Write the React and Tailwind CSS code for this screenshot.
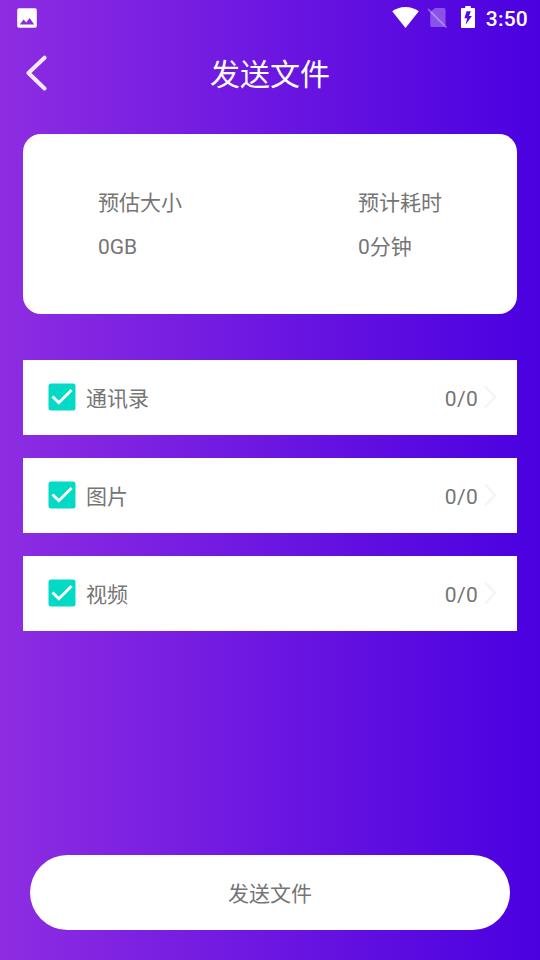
const FONT = "font-[Roboto,'Noto_Sans_CJK_SC',sans-serif]";

function StatusBar() {
  return (
    <div className="flex h-9 items-start text-white">
      <svg className="mt-2 ml-[17px] h-5 w-5" viewBox="0 0 20 20" fill="currentColor">
        <path
          fillRule="evenodd"
          d="M2 0.3h16a1.8 1.8 0 0 1 1.8 1.8v15.8a1.8 1.8 0 0 1-1.8 1.8H2a1.8 1.8 0 0 1-1.8-1.8V2.1A1.8 1.8 0 0 1 2 .3zM2.8 16.4h14.4L12.6 10l-3.4 4.4-2.6-2.8z"
        />
      </svg>
      <div className="flex-1" />
      <svg className="mt-[7px] h-[21px] w-[27px]" viewBox="0 0 27 21" fill="currentColor">
        <path d="M13.5 21L0.2 4.3C3.7 1.6 8.2 0 13.5 0s9.8 1.6 13.3 4.3z" />
      </svg>
      <svg className="mt-[7px] ml-[8px] h-[22px] w-[21px]" viewBox="0 0 21 22" fill="currentColor">
        <path
          d="M8 1h9a1.500 1.500 0 0 1 1.500 1.500V18a2 2 0 0 1-1.500 2H4.800a1.500 1.500 0 0 1-1.500-1.500V5z"
          fillOpacity="0.300"
        />
        <path d="M1 2L19.600 20.600" stroke="currentColor" strokeOpacity="0.300" strokeWidth="1.900" />
      </svg>
      <svg className="mt-[6px] ml-[13px] h-[22px] w-[14px]" viewBox="0 0 14 22" fill="currentColor">
        <path
          fillRule="evenodd"
          d="M4.2 0h5.6v2H13a1 1 0 0 1 1 1v18a1 1 0 0 1-1 1H1a1 1 0 0 1-1-1V3a1 1 0 0 1 1-1h3.2zM9.8 5.2H5.600L3.400 12.300h2.800L4.600 18.800 10.900 10H8z"
        />
      </svg>
      <span className="mt-[6px] mr-3 ml-[11px] text-[21px] leading-[26px] font-medium tracking-[0.2px]">3:50</span>
    </div>
  );
}

function Header() {
  return (
    <header className="grid h-[74px] grid-cols-[1fr_auto_1fr] items-center text-white">
      <svg className="ml-[25px] h-[38px] w-6 blur-[0.6px]" viewBox="0 0 24 38" fill="none" stroke="currentColor" strokeOpacity="0.9">
        <path d="M19.5 3.7L3.5 19l16 15.500" strokeWidth="4" strokeLinecap="round" strokeLinejoin="round" />
      </svg>
      <h1 className="pt-1 text-[30px] leading-[44px]">发送文件</h1>
    </header>
  );
}

function Estimate({ label, value }) {
  return (
    <div className="flex w-[84px] flex-col gap-[14px] pt-[2px] leading-[30px] whitespace-nowrap">
      <span>{label}</span>
      <span>{value}</span>
    </div>
  );
}

function CategoryRow({ label, count }) {
  return (
    <div className="flex h-[75px] items-center bg-white pr-5 pl-[25px]">
      <svg className="mb-[2px] h-7 w-7" viewBox="0 0 28 28" fill="none">
        <rect x="0.5" y="0.5" width="27" height="27" rx="2.5" fill="#03DAC5" />
        <path d="M4.500 13.500l6.300 6.200L23.600 7" stroke="#fff" strokeWidth="2.900" />
      </svg>
      <span className="ml-[10px] flex-1 pt-1">{label}</span>
      <span className="pt-[5px] tracking-[0.3px]">{count}</span>
      <svg className="mb-px ml-[6px] h-6 w-[13px]" viewBox="0 0 13 24" fill="none">
        <path d="M1 1.5L11.2 12 1 22.5" stroke="#f4f4f4" strokeWidth="2.400" />
      </svg>
    </div>
  );
}

export default function App() {
  return (
    <div
      className={`${FONT} flex h-[960px] w-[540px] flex-col bg-[linear-gradient(90deg,#8E2DE2,#4A00E0)] text-[21px] text-[#757575]`}
    >
      <StatusBar />
      <Header />
      <section className="mx-[23px] mt-6 flex h-[180px] items-center justify-between rounded-[18px] bg-white px-[75px]">
        <Estimate label="预估大小" value="0GB" />
        <Estimate label="预计耗时" value="0分钟" />
      </section>
      <main className="mx-[23px] mt-[46px] flex flex-1 flex-col gap-[23px]">
        <CategoryRow label="通讯录" count="0/0" />
        <CategoryRow label="图片" count="0/0" />
        <CategoryRow label="视频" count="0/0" />
      </main>
      <button className="mx-[30px] mb-[30px] h-[75px] rounded-full bg-white pt-1">发送文件</button>
    </div>
  );
}
